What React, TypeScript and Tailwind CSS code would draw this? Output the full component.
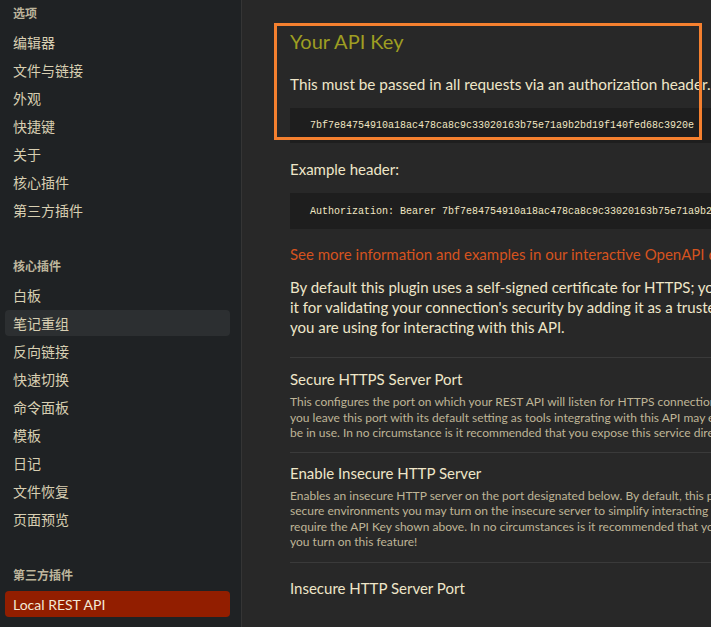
const cjk = "font-['Lato','Noto_Sans_CJK_SC',sans-serif]";

const sections = [
  {
    title: "选项",
    items: ["编辑器", "文件与链接", "外观", "快捷键", "关于", "核心插件", "第三方插件"],
  },
  {
    title: "核心插件",
    items: ["白板", "笔记重组", "反向链接", "快速切换", "命令面板", "模板", "日记", "文件恢复", "页面预览"],
  },
  {
    title: "第三方插件",
    items: ["Local REST API"],
  },
];

const apiKey = "7bf7e84754910a18ac478ca8c9c33020163b75e71a9b2bd19f140fed68c3920e";

function Sidebar() {
  return (
    <aside className={`w-[242px] shrink-0 h-full bg-[#1f2224] border-r border-[#353535] ${cjk}`}>
      {sections.map((section, i) => (
        <div key={section.title} className={i === 0 ? "" : "mt-[29px]"}>
          <div className="h-[28px] flex items-center pl-[13px] text-[12px] font-bold text-[#bdb59c]">
            {section.title}
          </div>
          {section.items.map((item) => {
            const active = item === "笔记重组";
            const current = item === "Local REST API";
            return (
              <div key={item} className="h-[28px] flex items-center">
                <div
                  className={`mx-[5px] w-[225px] h-[26px] flex items-center pl-[8px] rounded-[4px] text-[14px] ${
                    current
                      ? "bg-[#921e00] text-[#f3e9d6]"
                      : active
                      ? "bg-[#2c2f31] text-[#d8cfb2]"
                      : "text-[#d8cfb2]"
                  }`}
                >
                  {item}
                </div>
              </div>
            );
          })}
        </div>
      ))}
    </aside>
  );
}

function CodeBlock({ children, h }: { children: string; h: string }) {
  return (
    <div className={`${h} bg-[#1e1e1e] flex items-center pl-[20px] font-['Liberation_Mono',monospace] text-[10px] text-[#f1e7c4] whitespace-nowrap`}>
      {children}
    </div>
  );
}

function Lines({ lines, className }: { lines: string[]; className: string }) {
  return (
    <div className={`whitespace-nowrap ${className}`}>
      {lines.map((l) => (
        <div key={l}>{l}</div>
      ))}
    </div>
  );
}

function Setting({ title, lines, top }: { title: string; lines: string[]; top: string }) {
  return (
    <div className={`border-t border-[#3a3a3a] ${top}`}>
      <div className="text-[15px] leading-[20px] text-[#efe6c8]">{title}</div>
      {lines.length > 0 && (
        <Lines lines={lines} className="mt-[5px] text-[12px] leading-[15.5px] text-[#bfb597]" />
      )}
    </div>
  );
}

export default function App() {
  return (
    <div className="w-[711px] h-[627px] flex bg-[#282828] overflow-hidden">
      <Sidebar />
      <main className={`relative flex-1 h-full overflow-hidden pl-[48px] pt-[27px] ${cjk}`}>
        {/* highlight box drawn over the key section */}
        <div className="absolute left-[32px] top-[23px] w-[428px] h-[117px] border-[3px] border-[#f5802f]" />

        <div className="w-[700px]">
          <h2 className="text-[20px] leading-[28px] text-[#9e9e22]">Your API Key</h2>
          <p className="mt-[19px] text-[15.3px] leading-[20px] text-[#efe6c8] whitespace-nowrap">
            This must be passed in all requests via an authorization header.
          </p>
          <div className="mt-[14px]">
            <CodeBlock h="h-[35px]">{apiKey}</CodeBlock>
          </div>

          <p className="mt-[16px] text-[15px] leading-[20px] text-[#efe6c8]">Example header:</p>
          <div className="mt-[14px]">
            <CodeBlock h="h-[36px]">{`Authorization: Bearer ${apiKey}`}</CodeBlock>
          </div>

          <p className="mt-[15px] text-[15px] leading-[20px] text-[#d5531f] whitespace-nowrap">
            See more information and examples in our interactive OpenAPI documentation.
          </p>

          <Lines
            className="mt-[13px] text-[15px] leading-[20px] text-[#efe6c8]"
            lines={[
              "By default this plugin uses a self-signed certificate for HTTPS; you may want to download this certificate to use",
              "it for validating your connection's security by adding it as a trusted certificate authority in the browser or tool",
              "you are using for interacting with this API.",
            ]}
          />

          <div className="mt-[20px]">
            <Setting
              top="pt-[11px] pb-[11px]"
              title="Secure HTTPS Server Port"
              lines={[
                "This configures the port on which your REST API will listen for HTTPS connections. It is recommended that",
                "you leave this port with its default setting as tools integrating with this API may expect the default port to",
                "be in use. In no circumstance is it recommended that you expose this service directly to the internet.",
              ]}
            />
            <Setting
              top="pt-[10px] pb-[12px]"
              title="Enable Insecure HTTP Server"
              lines={[
                "Enables an insecure HTTP server on the port designated below. By default, this plugin requires a secure HTTPS connection, but in",
                "secure environments you may turn on the insecure server to simplify interacting with the API. Interactions with the API will still",
                "require the API Key shown above. In no circumstances is it recommended that you expose this service to the internet, especially if",
                "you turn on this feature!",
              ]}
            />
            <Setting top="pt-[15px]" title="Insecure HTTP Server Port" lines={[]} />
          </div>
        </div>
      </main>
    </div>
  );
}
